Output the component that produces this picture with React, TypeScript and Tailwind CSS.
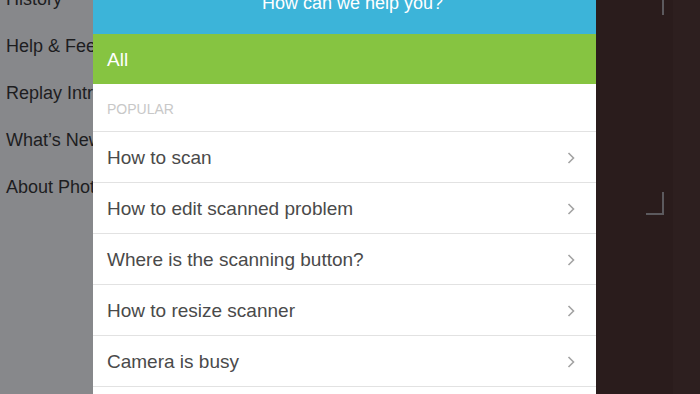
const menu = ['History', 'Help & Feedback', 'Replay Intro', 'What\u2019s New', 'About Photomath']

const questions = [
  'How to scan',
  'How to edit scanned problem',
  'Where is the scanning button?',
  'How to resize scanner',
  'Camera is busy',
  'Why is my problem not solved?',
]

function Chevron() {
  return (
    <svg width="8" height="12" viewBox="0 0 8 12" className="shrink-0">
      <polyline points="1.5,1 6.5,6 1.5,11" fill="none" stroke="#a3a3a3" strokeWidth="1.6" />
    </svg>
  )
}

export default function App() {
  return (
    <div className="w-[700px] h-[394px] overflow-hidden flex font-['Liberation_Sans',Arial,sans-serif]">
      {/* dimmed side menu */}
      <div className="w-[93px] shrink-0 bg-[#87888b] overflow-hidden">
        <div className="mt-[-24px]">
          {menu.map((m) => (
            <div key={m} className="h-[47px] flex items-center pl-[6px] text-[18px] text-[#1d1d1f] whitespace-nowrap">
              {m}
            </div>
          ))}
        </div>
      </div>

      {/* help modal */}
      <div className="w-[503px] shrink-0 bg-white flex flex-col overflow-hidden">
        <div className="h-[34px] shrink-0 bg-[#3cb4d9] overflow-hidden">
          <div className="mt-[-8px] pl-[16px] text-center text-[18px] leading-[22px] text-white">How can we help you?</div>
        </div>
        <div className="h-[50px] shrink-0 bg-[#86c441] flex items-center pt-[2px] pl-[14px] text-[19px] text-white">All</div>
        <div className="h-[48px] shrink-0 flex items-center pt-[3px] pl-[14px] text-[14px] text-[#c8c8c8] border-b border-[#e2e2e2]">
          POPULAR
        </div>
        {questions.map((q) => (
          <div
            key={q}
            className="h-[51px] shrink-0 flex items-center justify-between pt-[2px] pl-[14px] pr-[21px] border-b border-[#e2e2e2] text-[19px] text-[#4a4a4a]"
          >
            <span>{q}</span>
            <Chevron />
          </div>
        ))}
      </div>

      {/* camera view */}
      <div className="relative flex-1 bg-[#2a1c1c]">
        <div className="absolute top-0 bottom-0 right-0 w-[27px] bg-[#2d1f1f]" />
        <div className="absolute left-[66px] top-0 w-[2px] h-[15px] bg-[#5c5a5e]" />
        <div className="absolute left-[66px] top-[192px] w-[2px] h-[23px] bg-[#5c5a5e]" />
        <div className="absolute left-[50px] top-[213px] w-[18px] h-[2px] bg-[#5c5a5e]" />
      </div>
    </div>
  )
}
